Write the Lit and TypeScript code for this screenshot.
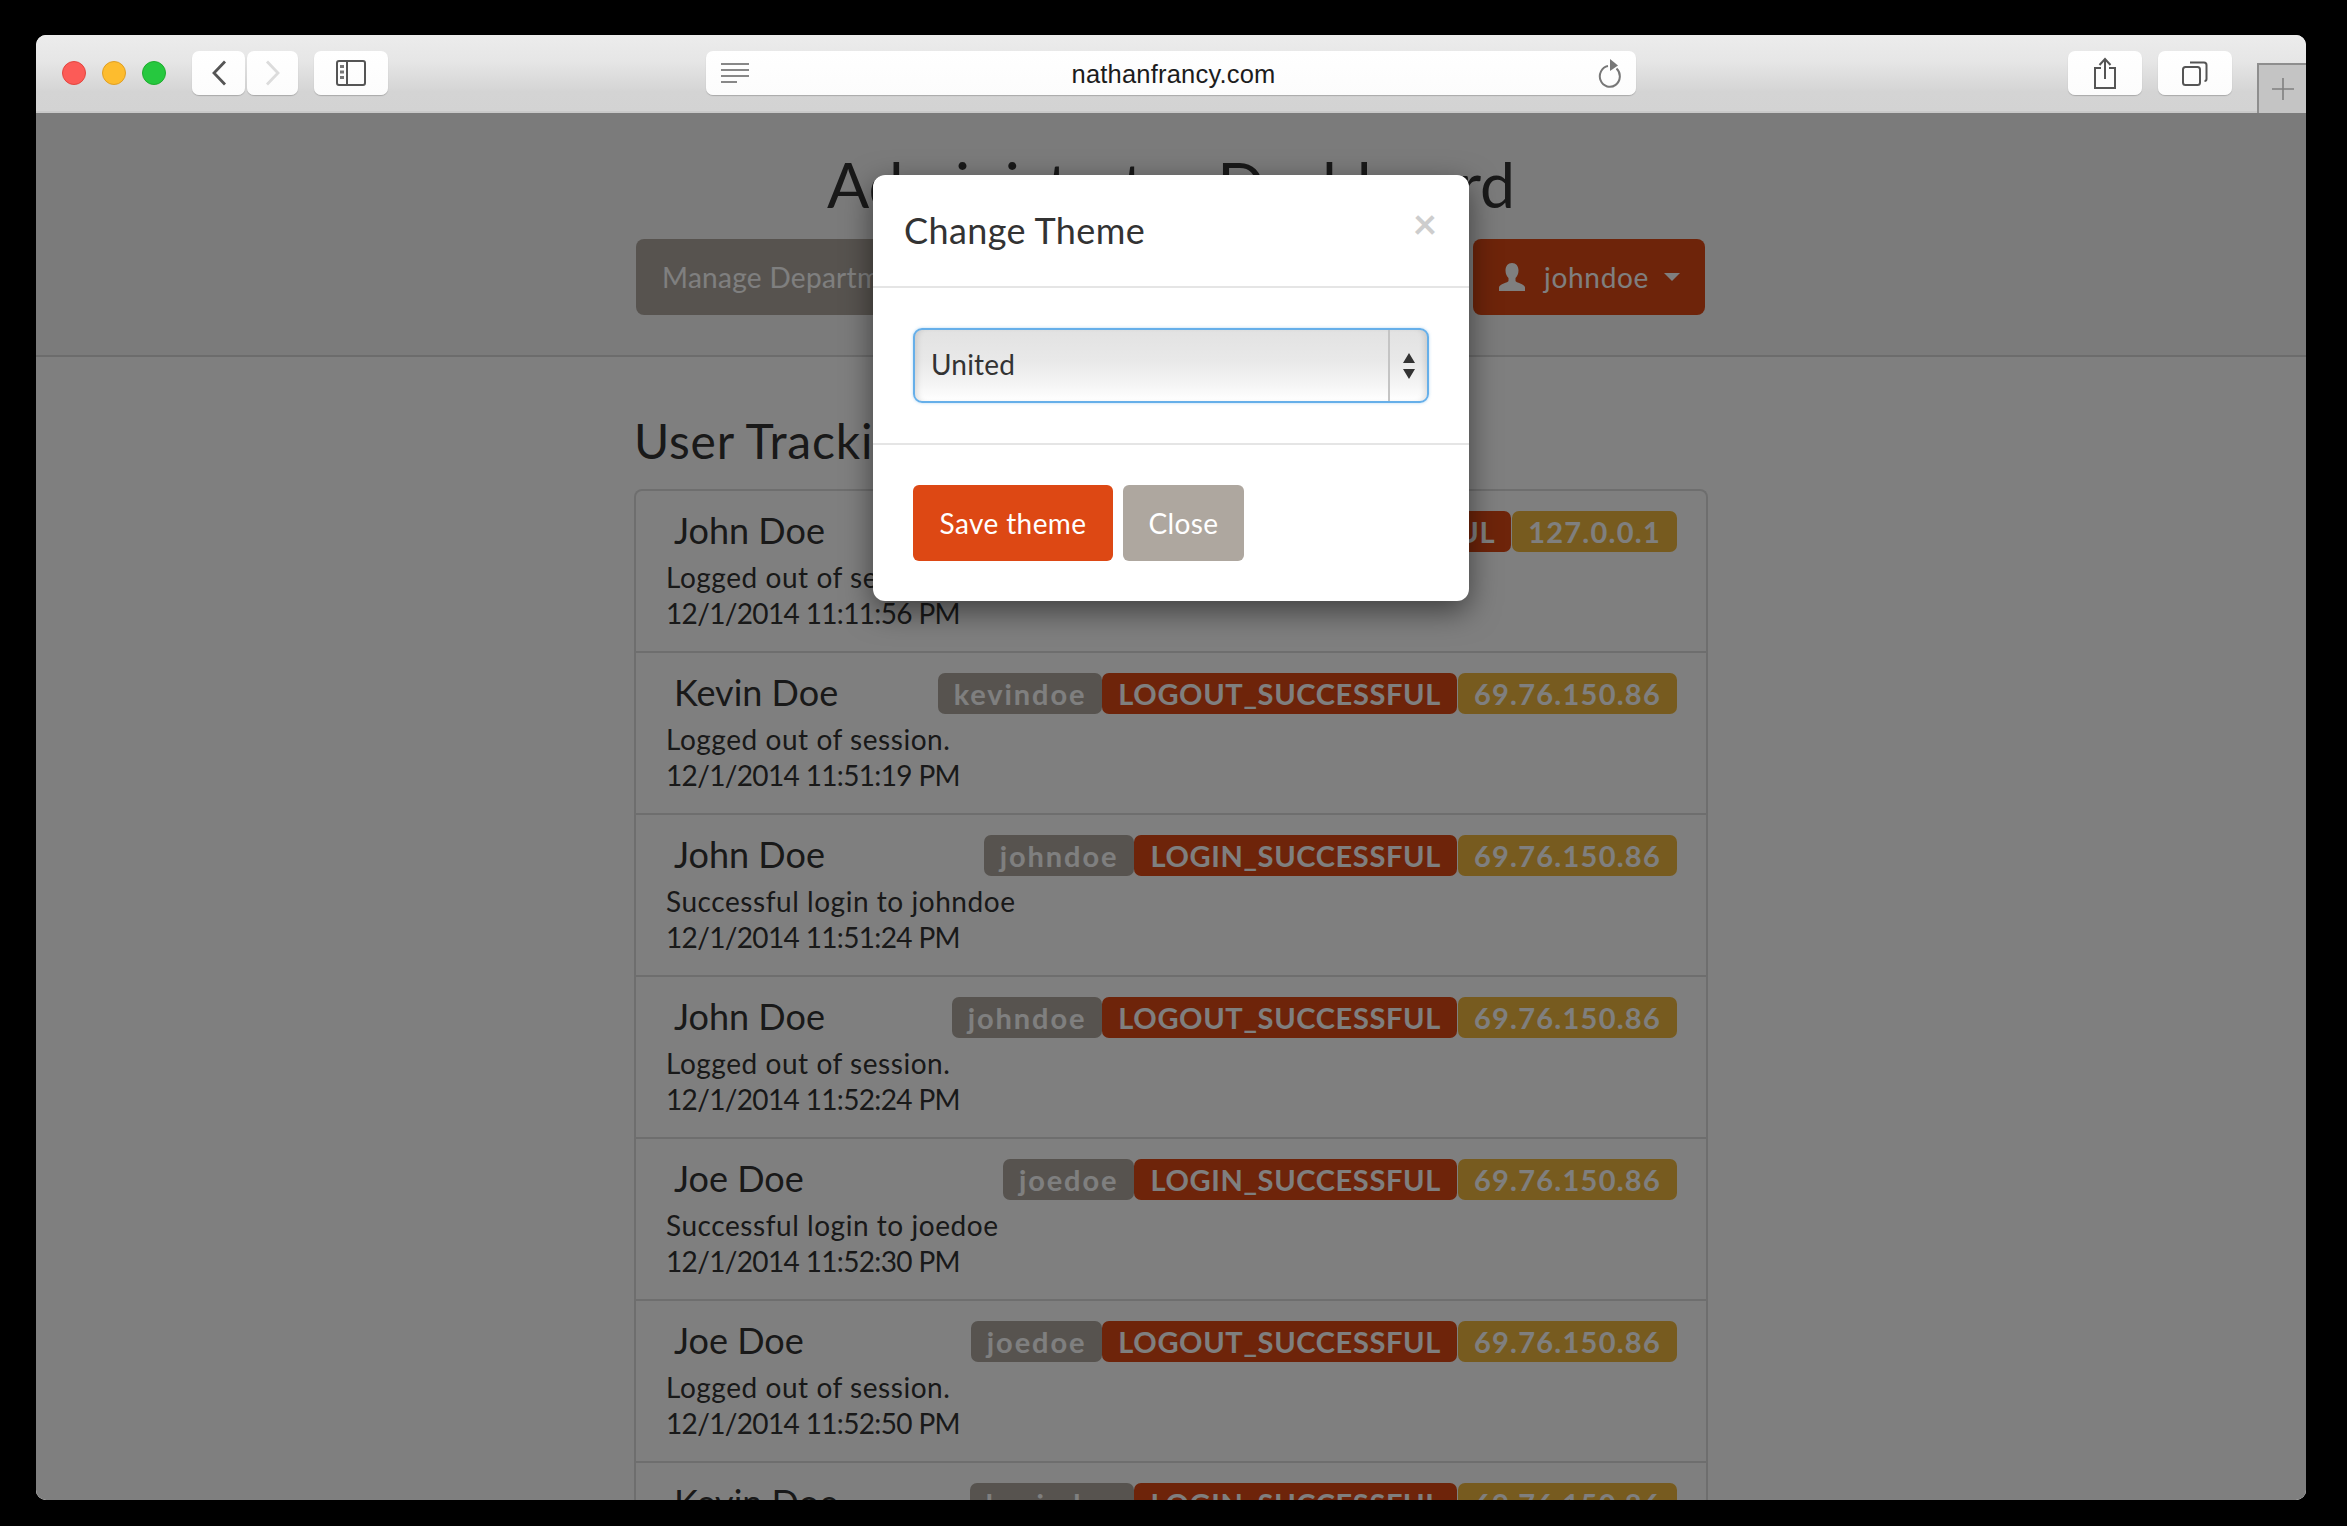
import { LitElement, html, css } from "lit";
import { customElement } from "lit/decorators.js";

interface Row { name: string; user: string; action: string; ip: string; text: string; time: string; }

const ROWS: Row[] = [
  { name: "John Doe", user: "johndoe", action: "LOGOUT_SUCCESSFUL", ip: "127.0.0.1", text: "Logged out of session.", time: "12/1/2014 11:11:56 PM" },
  { name: "Kevin Doe", user: "kevindoe", action: "LOGOUT_SUCCESSFUL", ip: "69.76.150.86", text: "Logged out of session.", time: "12/1/2014 11:51:19 PM" },
  { name: "John Doe", user: "johndoe", action: "LOGIN_SUCCESSFUL", ip: "69.76.150.86", text: "Successful login to johndoe", time: "12/1/2014 11:51:24 PM" },
  { name: "John Doe", user: "johndoe", action: "LOGOUT_SUCCESSFUL", ip: "69.76.150.86", text: "Logged out of session.", time: "12/1/2014 11:52:24 PM" },
  { name: "Joe Doe", user: "joedoe", action: "LOGIN_SUCCESSFUL", ip: "69.76.150.86", text: "Successful login to joedoe", time: "12/1/2014 11:52:30 PM" },
  { name: "Joe Doe", user: "joedoe", action: "LOGOUT_SUCCESSFUL", ip: "69.76.150.86", text: "Logged out of session.", time: "12/1/2014 11:52:50 PM" },
  { name: "Kevin Doe", user: "kevindoe", action: "LOGIN_SUCCESSFUL", ip: "69.76.150.86", text: "Successful login to kevindoe", time: "12/1/2014 11:53:02 PM" },
];

@customElement("app-root")
export class AppRoot extends LitElement {
  static styles = css`
    :host { display: block; width: 2347px; height: 1526px; background: #000; overflow: hidden; font-family: "Lato", "Noto Sans", sans-serif; color: #333; }
    .window { margin: 35px 0 0 36px; width: 2270px; height: 1465px; border-radius: 10px; overflow: hidden; display: flex; flex-direction: column; background: #fff; }

    .toolbar { flex: none; box-sizing: border-box; height: 78px; padding-top: 16px; display: flex; align-items: flex-start; background: linear-gradient(#ececec, #e6e6e6 35%, #d4d4d4 75%, #d3d3d3); border-bottom: 2px solid #c9c9c9; }
    .lights { display: flex; gap: 16px; margin: 10px 26px 0 26px; }
    .light { width: 24px; height: 24px; border-radius: 50%; box-sizing: border-box; border: 1px solid; }
    .red { background: #fc5b57; border-color: #e2463f; }
    .yellow { background: #fdbc2e; border-color: #df9f24; }
    .green { background: #26c83f; border-color: #1fac2e; }
    .tb { height: 44px; background: linear-gradient(#ffffff, #fcfcfc); border-radius: 7px; box-shadow: 0 1px 1px rgba(0,0,0,.2); display: flex; align-items: center; justify-content: center; box-sizing: border-box; }
    .tb svg { display: block; }
    .back { width: 53px; }
    .fwd { width: 51px; margin-left: 2px; }
    .side { width: 74px; margin-left: 16px; }
    .addr { width: 930px; margin-left: 318px; justify-content: space-between; padding: 0 13px 0 14px; }
    .url { font-family: "Liberation Sans", Arial, sans-serif; font-size: 25.5px; color: #1c1c1c; letter-spacing: .2px; padding-top: 2px; }
    .share { width: 74px; margin-left: 432px; }
    .tabs { width: 74px; margin-left: 16px; }
    .newtab { width: 49px; height: 50px; margin: 12px 0 0 25px; box-sizing: border-box; border-left: 2px solid #8e8e8e; border-top: 2px solid #8e8e8e; background: #c4c4c4; display: flex; align-items: center; justify-content: center; }

    .page { flex: 1; min-height: 0; position: relative; overflow: hidden; background: #fff; }
    .backdrop { position: absolute; inset: 0; background: rgba(0,0,0,.5); }
    .head { background: #f6f6f6; border-bottom: 2px solid #d9d9d9; height: 244px; box-sizing: border-box; padding-top: 31px; }
    .container { width: 1074px; margin: 0 auto; }
    h1 { margin: 0 0 15px; font-size: 62.5px; line-height: 80px; font-weight: 400; text-align: center; color: #333; }
    .nav { display: flex; justify-content: space-between; padding: 0 3px 0 2px; }
    .btn { height: 76px; border-radius: 8px; box-sizing: border-box; display: flex; align-items: center; color: #fff; font-size: 28px; letter-spacing: .3px; padding: 0 26px; }
    .btn-default { background: #aea79f; width: 400px; }
    .btn-primary { background: #dd4814; width: 232px; gap: 19px; padding-right: 24px; letter-spacing: .7px; }
    .caret { width: 0; height: 0; border-left: 8px solid transparent; border-right: 8px solid transparent; border-top: 8px solid #fff; margin-left: -4px; }

    h2 { margin: 56px 0 20px; font-size: 48px; line-height: 56px; font-weight: 400; color: #333; letter-spacing: .8px; }
    .list { border: 2px solid #ddd; border-bottom: 0; border-radius: 8px 8px 0 0; }
    .row { height: 162px; box-sizing: border-box; padding: 20px 29px 0 30px; border-bottom: 2px solid #ddd; }
    .top { display: flex; align-items: center; justify-content: space-between; height: 41px; margin-bottom: 7px; }
    .name { font-size: 36px; padding-left: 8px; padding-bottom: 4px; }
    .badges { display: flex; }
    .badge { height: 41px; box-sizing: border-box; padding: 0 16px; border-radius: 7px; display: flex; align-items: center; color: #fff; font-weight: 700; font-size: 29px; }
    .b-user { background: #aea79f; letter-spacing: 1.9px; }
    .b-act { background: #dd4814; letter-spacing: .65px; }
    .b-ip { background: #efb73e; margin-left: 1px; letter-spacing: 1.25px; }
    .line { font-size: 28px; line-height: 36px; }
    .msg { letter-spacing: .55px; }
    .time { letter-spacing: -.65px; }

    .modal { position: absolute; left: 837px; top: 62px; width: 596px; height: 426px; background: #fff; border-radius: 12px; box-shadow: 0 10px 30px rgba(0,0,0,.5); display: flex; flex-direction: column; }
    .m-head { height: 111px; box-sizing: border-box; padding: 0 32px 0 31px; display: flex; align-items: flex-start; justify-content: space-between; }
    .m-title { font-size: 36px; line-height: 40px; margin-top: 35px; color: #333; letter-spacing: .4px; }
    .x { font-size: 42px; line-height: 42px; font-weight: 700; color: #cdcdcd; margin: 27px 0 0 0; }
    .m-body { height: 159px; box-sizing: border-box; border-top: 2px solid #e5e5e5; border-bottom: 2px solid #e5e5e5; padding: 40px 40px; }
    .select { width: 516px; height: 75px; box-sizing: border-box; border: 2px solid #66afe9; border-radius: 9px; display: flex; align-items: stretch; font-size: 28px; letter-spacing: .2px; color: #333; background: linear-gradient(#e2e2e2, #e9e9e9 45%, #f6f6f6 80%, #fff); box-shadow: inset 6px 0 6px -4px rgba(0,0,0,.13), inset -6px 0 6px -4px rgba(0,0,0,.13), 0 0 3px rgba(102,175,233,.5); }
    .s-val { flex: 1; display: flex; align-items: center; padding-left: 16px; padding-bottom: 3px; }
    .s-arrow { width: 37px; border-left: 2px solid #c4c4c4; display: flex; align-items: center; justify-content: center; }
    .m-foot { padding: 40px 40px; display: flex; gap: 10px; }
    .m-btn { height: 76px; border-radius: 6px; color: #fff; font-size: 28px; letter-spacing: .4px; display: flex; align-items: center; justify-content: center; }
    .save { width: 200px; background: #dd4814; }
    .close { width: 121px; background: #aea79f; }
  `;

  private rowTpl(r: Row) {
    return html`<div class="row">
      <div class="top">
        <span class="name">${r.name}</span>
        <div class="badges">
          <span class="badge b-user">${r.user}</span>
          <span class="badge b-act">${r.action}</span>
          <span class="badge b-ip">${r.ip}</span>
        </div>
      </div>
      <div class="line msg">${r.text}</div>
      <div class="line time">${r.time}</div>
    </div>`;
  }

  render() {
    return html`<div class="window">
      <div class="toolbar">
        <div class="lights"><span class="light red"></span><span class="light yellow"></span><span class="light green"></span></div>
        <div class="tb back"><svg width="16" height="26" viewBox="0 0 16 26"><path d="M14 1.500 3 13l11 11.500" fill="none" stroke="#555" stroke-width="2.800"/></svg></div>
        <div class="tb fwd"><svg width="16" height="26" viewBox="0 0 16 26"><path d="M2 1.500 13 13 2 24.500" fill="none" stroke="#dcdcdc" stroke-width="2.800"/></svg></div>
        <div class="tb side"><svg width="30" height="26" viewBox="0 0 30 26"><rect x="1" y="1" width="28" height="24" rx="2" fill="none" stroke="#555" stroke-width="2"/><path d="M11 1v24" stroke="#555" stroke-width="2"/><path d="M4 5h4v3H4zM4 10.500h4v3H4zM4 16h4v3H4z" fill="#777"/></svg></div>
        <div class="tb addr">
          <svg width="30" height="22" viewBox="0 0 30 22"><path d="M1 2h28M1 8h28M1 14h28M1 20h16" stroke="#888" stroke-width="2"/></svg>
          <span class="url">nathanfrancy.com</span>
          <svg width="26" height="30" viewBox="0 0 26 30"><path d="M11 8a10 10.500 0 1 0 8.500 2.500" fill="none" stroke="#777" stroke-width="2"/><path d="M13 1l8 6.500-8 5.500z" fill="#777"/></svg>
        </div>
        <div class="tb share"><svg width="24" height="32" viewBox="0 0 24 32"><path d="M8 11H2v20h20V11h-6" fill="none" stroke="#555" stroke-width="2"/><path d="M12 22V2M6.500 8 12 2l5.500 6" fill="none" stroke="#555" stroke-width="2"/></svg></div>
        <div class="tb tabs"><svg width="26" height="26" viewBox="0 0 26 26"><rect x="1" y="7" width="17" height="18" rx="2.500" fill="none" stroke="#555" stroke-width="2"/><path d="M8 2.500h14a2.500 2.500 0 0 1 2.500 2.500v14a2 2 0 0 1-2 2" fill="none" stroke="#555" stroke-width="2"/></svg></div>
        <div class="newtab"><svg width="24" height="24" viewBox="0 0 24 24"><path d="M12 1v22M1 12h22" stroke="#808080" stroke-width="1.600"/></svg></div>
      </div>
      <div class="page">
        <div class="head">
          <div class="container">
            <h1>Administrator Dashboard</h1>
            <div class="nav">
              <div class="btn btn-default">Manage Departments</div>
              <div class="btn btn-primary">
                <svg width="26" height="28" viewBox="0 0 26 28"><path d="M13 0c4 0 6.500 3 6.500 7.500 0 3.500-1.500 6-3 7.500v3c0 1.500 9.500 3 9.500 6.500V28H0v-3.500C0 21 9.500 19.500 9.500 18v-3c-1.500-1.500-3-4-3-7.500C6.500 3 9 0 13 0z" fill="#fff"/></svg>
                <span>johndoe</span><span class="caret"></span>
              </div>
            </div>
          </div>
        </div>
        <div class="container">
          <h2>User Tracking</h2>
          <div class="list">${ROWS.map((r) => this.rowTpl(r))}</div>
        </div>
        <div class="backdrop"></div>
        <div class="modal">
          <div class="m-head"><span class="m-title">Change Theme</span><span class="x">×</span></div>
          <div class="m-body">
            <div class="select">
              <span class="s-val">United</span>
              <span class="s-arrow"><svg width="12" height="26" viewBox="0 0 12 26"><path d="M6 0l6 10H0zM6 26 0 16h12z" fill="#333"/></svg></span>
            </div>
          </div>
          <div class="m-foot"><div class="m-btn save">Save theme</div><div class="m-btn close">Close</div></div>
        </div>
      </div>
    </div>`;
  }
}
